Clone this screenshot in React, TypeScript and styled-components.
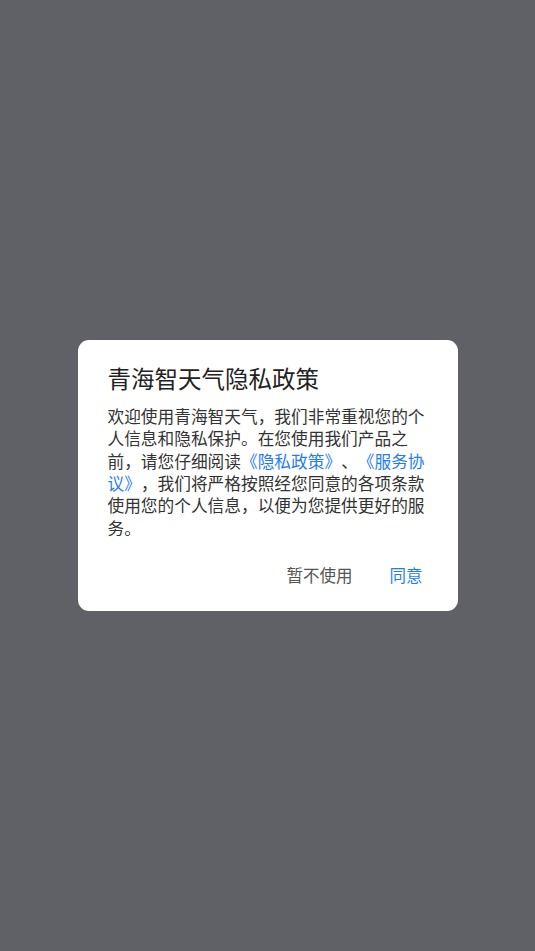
import React from 'react';
import styled, { createGlobalStyle } from 'styled-components';

const GlobalStyle = createGlobalStyle`
    html, body {
        margin: 0;
        padding: 0;
        height: 100%;
    }

    body {
        font-family: "Noto Sans CJK SC", "Noto Sans", sans-serif;
        background: #5f6167;
        text-spacing-trim: space-all;
    }
`;

const Backdrop = styled.div`
    min-height: 100vh;
    display: flex;
    align-items: center;
    justify-content: center;
    background: #5f6167;
`;

const Dialog = styled.div`
    width: 380px;
    box-sizing: border-box;
    background: #fff;
    border-radius: 11px;
    padding: 23px 0 16px;
    display: flex;
    flex-direction: column;
`;

const Title = styled.h2`
    margin: 0;
    padding: 0 30px;
    font-size: 23.5px;
    line-height: 30px;
    font-weight: 400;
    color: #222;
`;

const Body = styled.p`
    margin: 12px 0 0;
    padding: 0 30px;
    font-size: 16.7px;
    line-height: 22.4px;
    color: #333;
    text-spacing-trim: space-all;
`;

const Link = styled.a`
    color: #1f7ef4;
    text-decoration: none;
    cursor: pointer;
`;

const Actions = styled.div`
    margin-top: 16px;
    padding-right: 25px;
    display: flex;
    justify-content: flex-end;
    gap: 17px;
`;

const ActionButton = styled.button<{ primary?: boolean }>`
    height: 40px;
    padding: 0 10px;
    border: none;
    background: transparent;
    font-family: inherit;
    font-size: 16.5px;
    color: ${(props) => (props.primary ? '#1f7ef4' : '#555')};
    cursor: pointer;
`;

const App: React.FC = () => {
    return (
        <>
            <GlobalStyle />
            <Backdrop>
                <Dialog>
                    <Title>青海智天气隐私政策</Title>
                    <Body>
                        欢迎使用青海智天气，我们非常重视您的个人信息和隐私保护。在您使用我们产品之前，请您仔细阅读
                        <Link>《隐私政策》</Link>、<Link>《服务协议》</Link>
                        ，我们将严格按照经您同意的各项条款使用您的个人信息，以便为您提供更好的服务。
                    </Body>
                    <Actions>
                        <ActionButton>暂不使用</ActionButton>
                        <ActionButton primary>同意</ActionButton>
                    </Actions>
                </Dialog>
            </Backdrop>
        </>
    );
};

export default App;
